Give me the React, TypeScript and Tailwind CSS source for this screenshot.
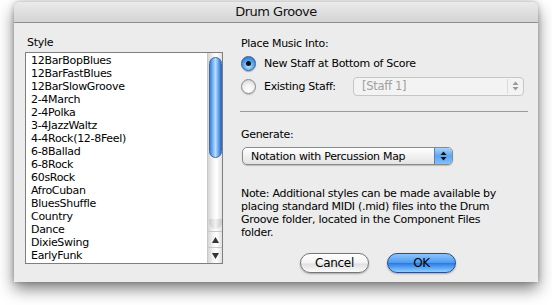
import React, { useState } from 'react';

const styles = [
  '12BarBopBlues',
  '12BarFastBlues',
  '12BarSlowGroove',
  '2-4March',
  '2-4Polka',
  '3-4JazzWaltz',
  '4-4Rock(12-8Feel)',
  '6-8Ballad',
  '6-8Rock',
  '60sRock',
  'AfroCuban',
  'BluesShuffle',
  'Country',
  'Dance',
  'DixieSwing',
  'EarlyFunk',
];

const font = "font-['Lucida_Grande','DejaVu_Sans',sans-serif]";

const Radio = ({ checked }: { checked: boolean }) =>
  checked ? (
    <span className="flex h-[15px] w-[15px] items-center justify-center rounded-full border border-[#3a5f9a] bg-[radial-gradient(circle_at_50%_70%,#b8e4ff_0%,#4d9be8_55%,#2d62b8_100%)] shadow-[0_1px_1px_rgba(0,0,0,0.3)]">
      <span className="h-[5px] w-[5px] rounded-full bg-[#111]" />
    </span>
  ) : (
    <span className="h-[15px] w-[15px] rounded-full border border-[#8a8a8a] bg-[radial-gradient(circle_at_50%_75%,#ffffff_0%,#f0f0f0_50%,#c8c8c8_100%)] shadow-[0_1px_1px_rgba(0,0,0,0.2)]" />
  );

const Arrows = ({ color }: { color: string }) => (
  <svg width="7" height="10" viewBox="0 0 7 10">
    <path d="M3.5 0.5 L6.5 4 L0.5 4 Z" fill={color} />
    <path d="M3.5 9.5 L6.5 6 L0.5 6 Z" fill={color} />
  </svg>
);

export default function App() {
  const [place, setPlace] = useState<'new' | 'existing'>('new');

  return (
    <div className={`h-[305px] w-[552px] overflow-hidden bg-white pl-[14px] pt-[2px] ${font}`}>
      <div className="flex h-[280px] w-[524px] flex-col rounded-t-[6px] bg-[#ececec] shadow-[0_7px_16px_rgba(0,0,0,0.5),0_0_5px_rgba(0,0,0,0.25)]">
        {/* title bar */}
        <div className="flex h-[21px] items-center justify-center rounded-t-[6px] border-b border-[#8e8e8e] bg-[linear-gradient(#ebebeb,#d4d4d4)] text-[13px] tracking-[-0.5px] text-[#111]">
          Drum Groove
        </div>

        <div className="flex flex-1 pl-[11px] pr-[10px] text-[11px] leading-[13px] tracking-[-0.3px] text-black">
          {/* left column */}
          <div className="flex w-[198px] flex-col pt-[13px]">
            <div className="pl-[2px]">Style</div>
            <div className="mt-[3px] flex h-[212px] border border-[#7f7f7f] bg-white">
              <ul className="flex-1 overflow-hidden pl-[5px] pt-[1px]">
                {styles.map((s) => (
                  <li key={s} className="h-[13px] whitespace-nowrap">
                    {s}
                  </li>
                ))}
              </ul>
              <div className="flex w-[15px] flex-col border-l border-[#c8c8c8] bg-[linear-gradient(90deg,#d6d6d6,#f6f6f6_40%,#ffffff_60%,#e2e2e2)]">
                <div className="mx-auto mt-[4px] h-[101px] w-[13px] rounded-full border border-[#3f67a8] bg-[linear-gradient(90deg,#3d7fd8,#8fc6ff_35%,#b9defb_50%,#6aa9ef_75%,#2d6ad0)]" />
                <div className="flex-1" />
                <div className="mx-auto mb-[2px] h-[10px] w-[13px] rounded-b-full bg-[linear-gradient(90deg,#c8c8c8,#f2f2f2,#c8c8c8)]" />
                <div className="flex h-[16px] items-center justify-center border-t border-[#c8c8c8]">
                  <svg width="7" height="6" viewBox="0 0 7 6">
                    <path d="M3.5 0 L7 6 L0 6 Z" fill="#333" />
                  </svg>
                </div>
                <div className="flex h-[16px] items-center justify-center border-t border-[#c8c8c8]">
                  <svg width="7" height="6" viewBox="0 0 7 6">
                    <path d="M3.5 6 L7 0 L0 0 Z" fill="#333" />
                  </svg>
                </div>
              </div>
            </div>
          </div>

          {/* right column */}
          <div className="ml-[17px] flex flex-1 flex-col pt-[14px]">
            <div className="pl-[1px]">Place Music Into:</div>
            <label
              className="mt-[5px] flex h-[16px] items-center gap-[8px] pl-[1px]"
              onClick={() => setPlace('new')}
            >
              <Radio checked={place === 'new'} />
              <span>New Staff at Bottom of Score</span>
            </label>
            <div className="mt-[5px] flex h-[20px] items-center pl-[1px]">
              <label
                className="flex w-[112px] items-center gap-[8px]"
                onClick={() => setPlace('existing')}
              >
                <Radio checked={place === 'existing'} />
                <span>Existing Staff:</span>
              </label>
              <div className="flex h-[19px] w-[171px] items-center justify-between rounded-[4px] border border-[#c6c6c6] bg-[#f3f3f3] pl-[8px] pr-[4px] text-[11.5px] text-[#a0a0a0]">
                <span>[Staff 1]</span>
                <span className="flex h-[15px] items-center border-l border-[#dcdcdc] pl-[4px]">
                  <Arrows color="#9a9a9a" />
                </span>
              </div>
            </div>

            <div className="mt-[15px] h-px w-[288px] bg-[#9a9a9a]" />

            <div className="mt-[16px] pl-[1px]">Generate:</div>
            <div className="ml-[2px] mt-[6px] flex h-[18px] w-[211px] items-center overflow-hidden rounded-[5px] border border-[#8a8a8a] bg-[linear-gradient(#ffffff,#f1f1f1_50%,#e3e3e3)] shadow-[0_1px_1px_rgba(0,0,0,0.2)]">
              <span className="flex-1 pl-[8px]">Notation with Percussion Map</span>
              <span className="flex h-full w-[18px] items-center justify-center border-l border-[#5a7fb8] bg-[linear-gradient(#a9d3ff,#5ea6f0_50%,#7fc0ff)]">
                <Arrows color="#111" />
              </span>
            </div>

            <p className="mt-[22px] w-[268px] pl-[1px]">
              Note: Additional styles can be made available by placing standard MIDI (.mid) files into the Drum Groove folder, located in the Component Files folder.
            </p>

            <div className="mt-[14px] flex gap-[18px] pl-[60px]">
              <button className="h-[20px] w-[69px] rounded-full border border-[#777] bg-[linear-gradient(#ffffff,#f3f3f3_50%,#e0e0e0_55%,#fbfbfb)] text-[12px] text-black shadow-[0_1px_2px_rgba(0,0,0,0.3)]">
                Cancel
              </button>
              <button className="h-[20px] w-[69px] rounded-full border border-[#2b4f8c] bg-[linear-gradient(#8cc4ff,#4e9cf0_48%,#2a7be6_52%,#8fd0ff)] text-[12px] text-black shadow-[0_1px_2px_rgba(0,0,0,0.3)]">
                OK
              </button>
            </div>
          </div>
        </div>
      </div>
    </div>
  );
}
